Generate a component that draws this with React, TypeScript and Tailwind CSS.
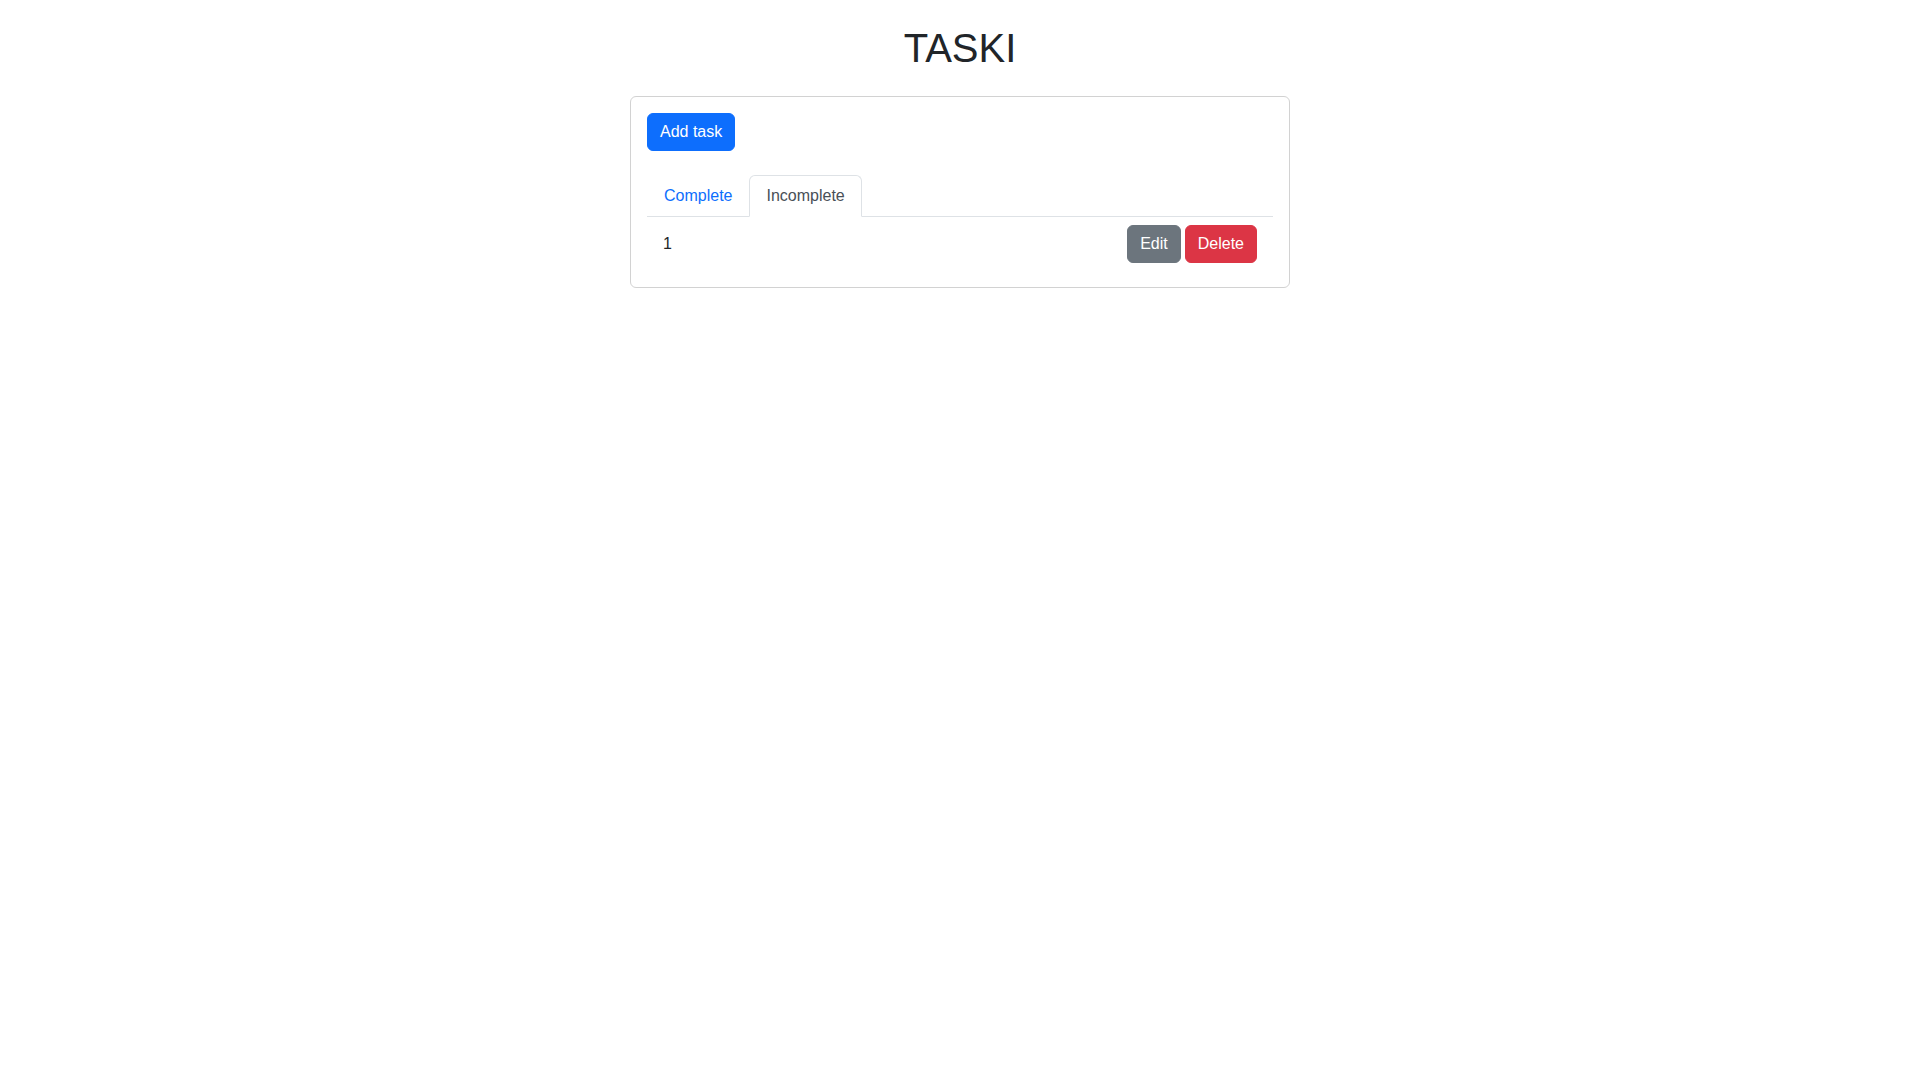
import { useState } from "react";

const tasks = [{ id: 1, title: "1", done: false }];

const App = () => {
  const [tab, setTab] = useState<"complete" | "incomplete">("incomplete");

  const visible = tasks.filter((t) => (tab === "complete" ? t.done : !t.done));

  return (
    <div
      className="min-h-screen bg-white text-[#212529] text-base leading-6"
      style={{ fontFamily: '"Liberation Sans", Arial, sans-serif' }}
    >
      <h1 className="pt-6 mb-6 text-center text-[40px] leading-[48px] font-medium">TASKI</h1>

      <div className="w-[660px] mx-auto border border-[#d2d2d2] rounded-md p-4">
        <button className="h-[38px] px-3 rounded-md bg-[#0d6efd] border border-[#0d6efd] text-white">
          Add task
        </button>

        <div className="mt-6 flex border-b border-[#dee2e6]">
          <button
            onClick={() => setTab("complete")}
            className={`-mb-px px-4 py-2 border rounded-t-md ${
              tab === "complete"
                ? "text-[#495057] bg-white border-[#dee2e6] border-b-white"
                : "text-[#0d6efd] border-transparent"
            }`}
          >
            Complete
          </button>
          <button
            onClick={() => setTab("incomplete")}
            className={`-mb-px px-4 py-2 border rounded-t-md ${
              tab === "incomplete"
                ? "text-[#495057] bg-white border-[#dee2e6] border-b-white"
                : "text-[#0d6efd] border-transparent"
            }`}
          >
            Incomplete
          </button>
        </div>

        <ul>
          {visible.map((t) => (
            <li key={t.id} className="flex items-center justify-between px-4 py-2">
              <span>{t.title}</span>
              <div className="flex gap-1">
                <button className="h-[38px] px-3 rounded-md bg-[#6c757d] border border-[#6c757d] text-white">
                  Edit
                </button>
                <button className="h-[38px] px-3 rounded-md bg-[#dc3545] border border-[#dc3545] text-white">
                  Delete
                </button>
              </div>
            </li>
          ))}
        </ul>
      </div>
    </div>
  );
};

export default App;
